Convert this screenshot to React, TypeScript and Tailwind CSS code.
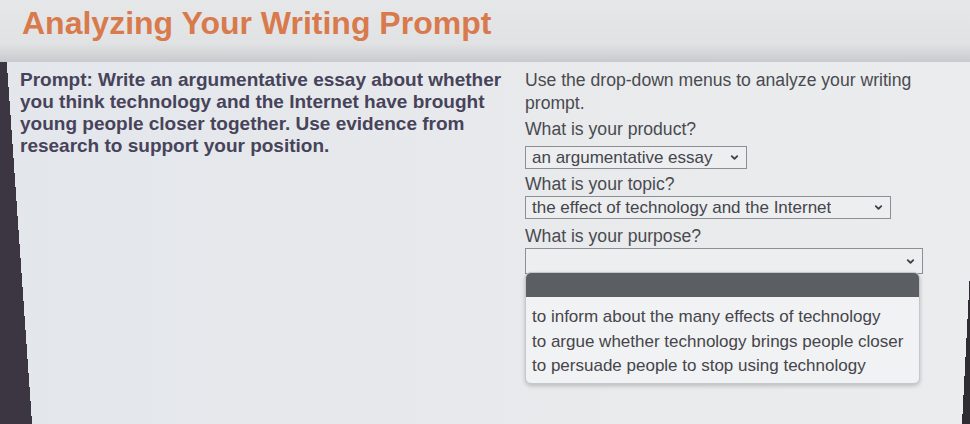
import { ChevronDown } from "lucide-react";

const font = { fontFamily: '"Liberation Sans", Arial, sans-serif' };

function Select({ value, className }: { value?: string; className: string }) {
  return (
    <div
      className={`flex h-[23px] items-center justify-between border border-[#8d8f93] bg-[#eceef0] pl-[6px] pr-[6px] text-[17px] leading-none text-[#45454b] ${className}`}
    >
      <span className="truncate">{value ?? ""}</span>
      <ChevronDown className="h-[11px] w-[11px] shrink-0 text-[#3f4045]" strokeWidth={4} />
    </div>
  );
}

export default function App() {
  const purposes = [
    "to inform about the many effects of technology",
    "to argue whether technology brings people closer",
    "to persuade people to stop using technology",
  ];

  return (
    <div className="flex h-[424px] w-[970px] flex-col overflow-hidden bg-[#e5e8eb]" style={font}>
      {/* Header */}
      <header className="flex h-[62px] shrink-0 items-start bg-[linear-gradient(to_bottom,#e6e7e9_0%,#e1e2e4_70%,#c8cacd_100%)] pl-[22px] pt-[3px]">
        <h1 className="text-[32px] font-bold leading-[40px] text-[#d97a4c]">Analyzing Your Writing Prompt</h1>
      </header>

      {/* Body */}
      <section className="grid flex-1 grid-cols-[525px_1fr] bg-[linear-gradient(86deg,#3b3642_0_32px,transparent_32px),linear-gradient(273deg,#2f2d33_0_8px,transparent_8px),linear-gradient(to_right,#e3e6eb,#e8eaec_60%,#eaeced)] pt-[7px]">
        <div className="pl-[20px] pr-[10px]">
          <p className="text-[19px] font-bold leading-[22px] text-[#47435a]">
            Prompt: Write an argumentative essay about whether you think technology and the Internet have brought
            young people closer together. Use evidence from research to support your position.
          </p>
        </div>

        <div className="flex flex-col text-[17.6px] leading-[23px] text-[#4a4a50]">
          <p className="pr-[40px]">Use the drop-down menus to analyze your writing prompt.</p>
          <p className="mt-[2px] leading-[24px]">What is your product?</p>
          <Select value="an argumentative essay" className="mt-[5px] mb-[3px] w-[222px]" />
          <p className="leading-[24px]">What is your topic?</p>
          <Select value="the effect of technology and the Internet" className="mb-[5px] w-[366px]" />
          <p className="leading-[24px]">What is your purpose?</p>
          <Select className="h-[26px] w-[398px]" />

          <div className="mt-[-2px] w-[395px] overflow-hidden rounded-md border border-[#c4c7cb] bg-[#f1f2f3] shadow-[0_2px_4px_rgba(0,0,0,0.2)]">
            <div className="h-[24px] bg-[#5b5f64]" />
            <ul className="pb-[4px] pt-[8px] text-[17px] leading-[24.5px] text-[#45454b]">
              {purposes.map((p) => (
                <li key={p} className="px-[6px]">
                  {p}
                </li>
              ))}
            </ul>
          </div>
        </div>
      </section>
    </div>
  );
}
